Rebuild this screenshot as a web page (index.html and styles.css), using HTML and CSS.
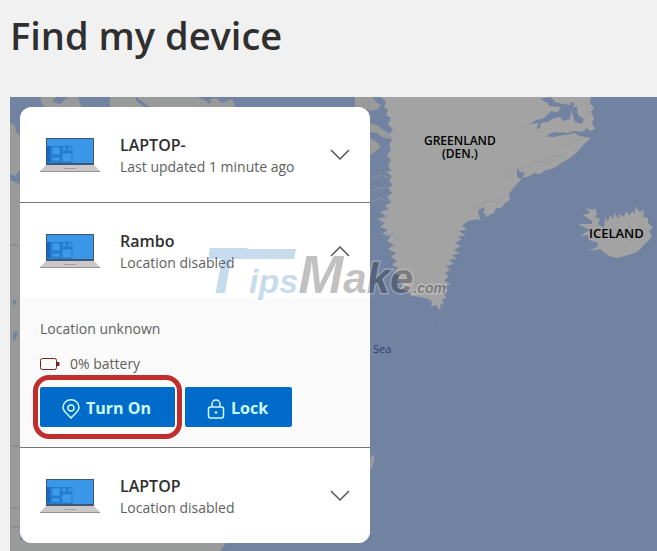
FILE: index.html
```html
<!DOCTYPE html>
<html lang="en">
<head>
    <meta charset="UTF-8">
    <meta name="viewport" content="width=device-width, initial-scale=1.0">
    <title>Find my device</title>
    <link rel="stylesheet" href="styles.css">
</head>
<body>
    <!-- shared icons -->
    <svg class="sprite" aria-hidden="true">
        <symbol id="laptop" viewBox="0 0 60 36">
            <path d="M6 1h48v27H6z" fill="#3b5878"/>
            <path d="M7 2h46v24H7z" fill="#3a96e6"/>
            <path d="M7 9h25v17H7z" fill="#2583d6"/>
            <path d="M7 9h3v16H7z" fill="#1668b8"/>
            <path d="M12 10h8v8h-8zM22 10h4v4h-4zM28 10h4v4h-4zM12 20h8v4h-8zM22 16h10v9H22z" fill="#3c9bea" stroke="#1b70c2" stroke-width="0.6"/>
            <path d="M6 28h48l6 6H0z" fill="#cbc8c7"/>
            <path d="M0 34h60v1H0z" fill="#96908e"/>
            <path d="M24 31h13l-1 1H24z" fill="#a5a09e"/>
        </symbol>
        <symbol id="chevron" viewBox="0 0 20 12">
            <path d="M1 1l9 9 9-9" fill="none" stroke="#555" stroke-width="1.5"/>
        </symbol>
    </svg>

    <h1>Find my device</h1>

    <main class="map">
        <svg class="map-art" viewBox="10 97 647 454" preserveAspectRatio="xMinYMin slice" aria-hidden="true">
            <!-- Canada -->
            <path class="land-dark" d="M10 123l5 3 1 6 4 4v34l-5 6-5-2z"/>
            <path class="land-dark" d="M10 180l10 4v367H10z"/>
            <path class="land-dark" d="M10 540h218l-8 11H10z"/>
            <path class="land-dark" d="M40 97h16l-4 5 8 2 8-7h10l4 12H48l-6-5zM110 97h88l8 4 10-3 6 5 10-4 4 10H110z"/>
            <path class="sea" d="M136 97l7 5 10 7-9-2-8-7zM206 98l6 4-4 2z"/>
            <path class="sea" d="M12 299l5 2-3 5zM13 333l5-2-2 8-3 2z"/>
            <path class="road" d="M10 446h10M10 245h8M10 508h10M10 527h10"/>
            <!-- Baffin and Labrador coast, just past the card -->
            <path class="land-dark" d="M355 97h18l3 5 5 3-3 4-7 2-6-2-10 2z"/>
            <path class="land-dark" d="M370 123l7 2 6 5 9 5-1 4-9-2-4-4-8-1zM370 138l6 3 5 6-5 4-6 4zM370 458l3-3 2 3-3 10-2 2z"/>
            <!-- Greenland -->
            <path class="land" d="M381 97L386 102L384 107L388 110L386 115L391 118L388 124L393 129L390 134L392 140L389 145L391 150L387 155L391 160L388 165L391 171L386 172L392 176L389 181L393 185L388 188L392 193L387 197L391 202L385 206L389 209L380 212L386 216L377 219L385 223L380 227L388 230L382 234L391 236L387 241L394 245L388 249L396 253L391 257L397 261L392 265L398 268L394 273L400 276L396 281L403 284L400 289L408 291L411 296L420 297L428 299L432 302L431 307L436 305L440 310L441 303L444 305L442 299L447 298L443 294L448 291L444 287L450 284L444 280L449 277L445 273L450 270L446 266L454 264L449 260L457 259L452 255L460 253L454 250L461 246L455 243L462 239L457 237L465 235L459 231L467 229L462 226L468 221L478 219L480 221L482 215L486 217L494 213L496 208L501 208L505 203L510 200L509 194L513 188L518 183L522 178L529 176L534 173L540 174L546 170L554 168L561 163L567 160L574 155L580 149L584 144L591 138L580 136L574 133L567 135L560 134L546 137L551 133L557 132L565 134L573 131L582 132L587 128L590 131L595 129L592 123L594 118L591 112L594 107L590 103L591 97Z"/>
            <path class="sea" d="M551 97l4 5 8 2 8 1-1-3 5 1-4 8-1 8-7 2-3-4-6 1-6 4-7 1-1 5-4 1 3-6-8 1-7 4 12-8 7-1 8-8 7 1 3-5-12-1-1-3-8-4zM571 109l6-3 1 9 6 4-2 5-7-2zM546 136l18-4 3 2-13 3z"/>
            <path class="sea" d="M517 167l4 6 4-1-3 7-5-2zM478 210l7-3-2 6 3 2-6 5z"/>
            <path class="inlet" d="M371 179l10-4 9 3M372 190l16-3M371 202l9-4 8 3M380 219l9-4M386 236l8-3"/>
            <path class="ridge" d="M503 180l9-8 12-4 8-5 12-1 7-6 13-1M474 208l12-7 13 1 6-6M565 146l12-5M540 165l14-4"/>
            <path class="spray" d="M434 322l-5 13"/>
            <!-- Iceland -->
            <path class="land" d="M583 215L590 213L586 208L593 210L595 208L597 213L595 217L600 219L598 224L604 228L605 218L608 221L610 215L613 219L615 213L618 219L620 214L624 217L626 211L629 215L633 211L635 214L635 207L640 212L644 210L643 217L648 218L648 223L653 227L649 231L652 236L648 241L643 246L637 252L628 255L618 258L609 256L603 252L601 249L589 251L597 247L598 243L589 240L588 235L580 236L590 230L578 224L592 224L592 221Z"/>
            <path class="ridge" d="M612 226l8 9 12 6M628 222l4 12 8 5"/>
        </svg>

        <span class="label greenland">GREENLAND<br>(DEN.)</span>
        <span class="label iceland">ICELAND</span>
        <span class="label sea-name">Sea</span>

        <section class="devices">
            <article class="device">
                <button type="button" class="device-head" aria-expanded="false">
                    <svg class="laptop"><use href="#laptop"/></svg>
                    <span class="info">
                        <span class="name">LAPTOP-</span>
                        <span class="status">Last updated 1 minute ago</span>
                    </span>
                    <svg class="chevron"><use href="#chevron"/></svg>
                </button>
            </article>

            <article class="device">
                <button type="button" class="device-head" aria-expanded="true">
                    <svg class="laptop"><use href="#laptop"/></svg>
                    <span class="info">
                        <span class="name">Rambo</span>
                        <span class="status">Location disabled</span>
                    </span>
                    <svg class="chevron up"><use href="#chevron"/></svg>
                </button>
                <div class="details">
                    <p>Location unknown</p>
                    <p class="battery">
                        <svg viewBox="0 0 20 14" width="20" height="14" aria-hidden="true">
                            <rect x="0.5" y="1.5" width="16" height="11" rx="2" fill="none" stroke="#7a1c22"/>
                            <path d="M17 5h1.500q1 0 1 1v2q0 1-1 1H17z" fill="#7a1c22"/>
                        </svg>
                        0% battery
                    </p>
                    <div class="actions">
                        <button type="button" class="btn highlighted">
                            <svg viewBox="0 0 18 20" width="18" height="20" aria-hidden="true">
                                <path d="M9 19C6 15.500 1 12.500 1 8.500a8 7.700 0 0 1 16 0C17 12.500 12 15.500 9 19z"/>
                                <circle cx="9" cy="9" r="3"/>
                            </svg>
                            Turn On
                        </button>
                        <button type="button" class="btn">
                            <svg viewBox="0 0 18 20" width="18" height="20" aria-hidden="true">
                                <rect x="1.500" y="8" width="15" height="11" rx="2"/>
                                <path d="M5 8V5a4 4 0 0 1 8 0v3"/>
                                <circle class="dot" cx="9" cy="13.500" r="1.300"/>
                            </svg>
                            Lock
                        </button>
                    </div>
                </div>
            </article>

            <article class="device">
                <button type="button" class="device-head" aria-expanded="false">
                    <svg class="laptop"><use href="#laptop"/></svg>
                    <span class="info">
                        <span class="name">LAPTOP</span>
                        <span class="status">Location disabled</span>
                    </span>
                    <svg class="chevron"><use href="#chevron"/></svg>
                </button>
            </article>
        </section>

        <div class="watermark">
            <span class="mark-t">T</span><span class="mark-ips">ips</span><span class="mark-m">M</span><span class="mark-ake">ake</span><span class="mark-com">.com</span>
        </div>
    </main>
</body>
</html>
```
FILE: styles.css
```css
:root {
    --sea: #7183a1;
    --land: #a3a3a3;
    --blue: #006bc9;
    --ice: #ccfdff;
}

* {
    box-sizing: border-box;
}

body {
    display: flex;
    flex-direction: column;
    min-height: 100vh;
    margin: 0;
    background: #f1f1f1;
    color: #2f2f2f;
    font-family: 'Segoe UI', 'Open Sans', sans-serif;
    font-size: 14px;
}

h1 {
    margin: 0;
    padding: 10px 10px 37px;
    font-size: 38px;
    font-weight: 600;
    line-height: 50px;
}

p {
    margin: 0;
}

.sprite {
    position: absolute;
    width: 0;
    height: 0;
}

/* map */
.map {
    position: relative;
    flex: 1;
    margin-left: 10px;
    padding: 10px 10px 7px;
    background: var(--sea);
    overflow: hidden;
}

.map-art {
    position: absolute;
    top: 0;
    left: 0;
    width: 100%;
    height: 100%;
}

.land { fill: var(--land); }
.land-dark { fill: #999a9a; }
.sea { fill: var(--sea); }

.inlet,
.ridge,
.road,
.spray {
    fill: none;
    stroke: #8992a0;
}

.ridge { stroke: #999b9d; }
.road { stroke: #818181; }
.spray { stroke: #7b8ba5; }

.label {
    position: absolute;
    color: #000;
    font-size: 12px;
    font-weight: 600;
    line-height: 13px;
    text-align: center;
}

.greenland {
    top: 37px;
    left: 414px;
}

.iceland {
    top: 130px;
    left: 579px;
    font-size: 13px;
}

.sea-name {
    top: 245px;
    left: 363px;
    color: #2c3f70;
    font-size: 11px;
    font-weight: 400;
}

/* device list */
.devices {
    position: relative;
    max-width: 350px;
    border-radius: 12px;
    background: #fff;
    overflow: hidden;
}

.device + .device {
    border-top: 1px solid #767676;
}

.device-head {
    display: flex;
    align-items: center;
    gap: 20px;
    width: 100%;
    height: 95px;
    padding: 0 20px;
    border: 0;
    background: #fff;
    color: inherit;
    font: inherit;
    text-align: left;
    cursor: pointer;
}

.laptop {
    width: 60px;
    height: 36px;
}

.info {
    flex: 1;
    padding-top: 2px;
}

.name,
.status {
    display: block;
    line-height: 22px;
}

.name {
    font-size: 16px;
    font-weight: 600;
}

.status,
.details {
    color: #606060;
}

.chevron {
    width: 20px;
    height: 12px;
}

.up {
    transform: rotate(180deg);
}

.details {
    display: flex;
    flex-direction: column;
    gap: 12px;
    padding: 19px 20px 20px;
    background: #fafafa;
    line-height: 23px;
}

.battery {
    display: flex;
    align-items: center;
    gap: 10px;
}

.actions {
    display: flex;
    gap: 10px;
}

.btn {
    display: flex;
    position: relative;
    align-items: center;
    gap: 6px;
    height: 40px;
    padding: 3px 24px 0 22px;
    border: 0;
    border-radius: 2px;
    background: var(--blue);
    color: var(--ice);
    font: inherit;
    font-size: 16px;
    font-weight: 700;
    cursor: pointer;
}

.btn svg {
    fill: none;
    stroke: var(--ice);
    stroke-width: 1.5;
}

.btn .dot {
    fill: var(--ice);
    stroke: none;
}

.highlighted::after {
    content: "";
    position: absolute;
    inset: -12px -7px;
    border: 5px solid #c12c2c;
    border-radius: 16px;
}

/* site watermark over the card and map */
.watermark {
    display: flex;
    position: absolute;
    top: 139px;
    left: 194px;
    align-items: baseline;
    color: #000;
    font-family: 'Liberation Sans', sans-serif;
    font-style: italic;
    font-weight: 700;
    line-height: 70px;
    opacity: 0.24;
    pointer-events: none;
    paint-order: stroke fill;
    -webkit-text-stroke: 3px #fff;
}

.mark-t,
.mark-ips {
    color: #176bbb;
}

.mark-t {
    position: relative;
    font-size: 64px;
}

.mark-t::after {
    content: "";
    position: absolute;
    top: 13px;
    left: 6px;
    width: 85px;
    height: 10px;
    background: #176bbb;
    transform: skewX(-12deg);
}

.mark-ips {
    margin-left: 6px;
    font-size: 34px;
}

.mark-m { font-size: 54px; }
.mark-ake { font-size: 42px; }
.mark-com { font-size: 14px; }
```
